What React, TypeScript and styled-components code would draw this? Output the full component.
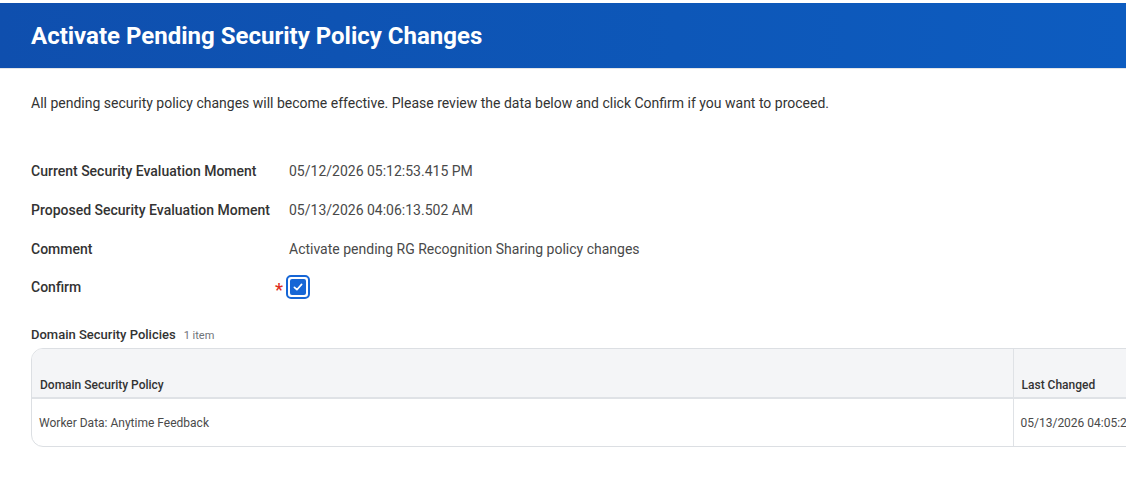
import React from 'react'
import styled, { createGlobalStyle } from 'styled-components'

const GlobalStyle = createGlobalStyle`
	html, body {
		margin: 0;
		padding: 0;
		background: #ffffff;
		overflow: hidden;
	}
	body {
		font-family: Roboto, 'Noto Sans', Arial, sans-serif;
		color: #333333;
	}
`

const fields = [
	{ label: 'Current Security Evaluation Moment', value: '05/12/2026 05:12:53.415 PM' },
	{ label: 'Proposed Security Evaluation Moment', value: '05/13/2026 04:06:13.502 AM' },
	{ label: 'Comment', value: 'Activate pending RG Recognition Sharing policy changes' },
]

const CheckIcon = () => (
	<svg width="12" height="12" viewBox="0 0 12 12" fill="none">
		<path d="M2.4 6.3 L4.9 8.7 L9.6 3.4" stroke="#ffffff" strokeWidth="1.7" strokeLinecap="round" strokeLinejoin="round" />
	</svg>
)

export default function App() {
	return (
		<Page>
			<GlobalStyle />
			<Header>
				<Title>Activate Pending Security Policy Changes</Title>
			</Header>
			<Content>
				<Intro>
					All pending security policy changes will become effective. Please review the data below and click Confirm if you want to proceed.
				</Intro>
				<Fields>
					{fields.map(f => (
						<FieldRow key={f.label}>
							<Label>{f.label}</Label>
							<Value>{f.value}</Value>
						</FieldRow>
					))}
					<FieldRow>
						<Label>Confirm</Label>
						<CheckCell>
							<Required>*</Required>
							<CheckRing>
								<CheckBox>
									<CheckIcon />
								</CheckBox>
							</CheckRing>
						</CheckCell>
					</FieldRow>
				</Fields>
				<GridTitle>
					Domain Security Policies<ItemCount>1 item</ItemCount>
				</GridTitle>
				<TableWrap>
					<Table>
						<thead>
							<tr>
								<HeadCell>Domain Security Policy</HeadCell>
								<HeadCell $divider>Last Changed</HeadCell>
							</tr>
						</thead>
						<tbody>
							<tr>
								<BodyCell>Worker Data: Anytime Feedback</BodyCell>
								<BodyCell $divider>05/13/2026 04:05:21.118 AM</BodyCell>
							</tr>
						</tbody>
					</Table>
				</TableWrap>
			</Content>
		</Page>
	)
}

const Page = styled.div`
	width: 1126px;
	height: 487px;
	overflow: hidden;
	padding-top: 3px;
	box-sizing: border-box;
`

const Header = styled.header`
	height: 65px;
	display: flex;
	align-items: center;
	padding-left: 31px;
	background: linear-gradient(90deg, #0f4fae 0%, #0d57b8 60%, #0d5cc0 100%);
	border-bottom: 1px solid #e3e5e8;
`

const Title = styled.h1`
	margin: 0;
	font-size: 24px;
	font-weight: 700;
	color: #ffffff;
`

const Content = styled.main`
	padding: 0 0 0 31px;
`

const Intro = styled.p`
	margin: 26px 0 0;
	font-size: 14px;
	line-height: 17px;
	color: #333333;
`

const Fields = styled.div`
	margin-top: 40px;
	display: flex;
	flex-direction: column;
`

const FieldRow = styled.div`
	display: grid;
	grid-template-columns: 258px 1fr;
	align-items: center;
	height: 38.7px;
`

const Label = styled.div`
	font-size: 14px;
	font-weight: 500;
	color: #333333;
`

const Value = styled.div`
	font-size: 14px;
	color: #494949;
`

const CheckCell = styled.div`
	display: flex;
	align-items: center;
	margin-left: -14px;
`

const Required = styled.span`
	color: #de2e21;
	font-size: 18px;
	font-weight: 500;
	line-height: 1;
	margin-top: 5px;
	width: 11px;
`

const CheckRing = styled.div`
	width: 24px;
	height: 24px;
	box-sizing: border-box;
	border: 2px solid #1666d6;
	border-radius: 5px;
	padding: 2px;
	background: #ffffff;
`

const CheckBox = styled.div`
	width: 16px;
	height: 16px;
	border-radius: 2px;
	background: #1666d6;
	display: flex;
	align-items: center;
	justify-content: center;
`

const GridTitle = styled.div`
	margin-top: 20px;
	font-size: 13px;
	font-weight: 500;
	color: #333333;
	line-height: 16px;
`

const ItemCount = styled.span`
	margin-left: 8px;
	font-size: 11px;
	font-weight: 400;
	color: #6f7378;
`

const TableWrap = styled.div`
	margin-top: 4px;
	width: 1220px;
	border: 1px solid #dcdfe3;
	border-radius: 12px;
	overflow: hidden;
`

const Table = styled.table`
	width: 100%;
	border-collapse: collapse;
	table-layout: fixed;
`

const HeadCell = styled.th<{ $divider?: boolean }>`
	height: 49px;
	box-sizing: border-box;
	padding: 0 8px 5px;
	vertical-align: bottom;
	text-align: left;
	background: #f4f5f7;
	font-size: 12px;
	font-weight: 500;
	color: #333333;
	border-bottom: 2px solid #dfe2e6;
	border-left: ${p => (p.$divider ? '1px solid #dfe2e6' : 'none')};
	width: ${p => (p.$divider ? '239px' : 'auto')};
`

const BodyCell = styled.td<{ $divider?: boolean }>`
	height: 48px;
	box-sizing: border-box;
	padding: 2px 8px 0 7px;
	font-size: 12px;
	color: #4a4a4a;
	white-space: nowrap;
	overflow: hidden;
	border-left: ${p => (p.$divider ? '1px solid #dfe2e6' : 'none')};
`
